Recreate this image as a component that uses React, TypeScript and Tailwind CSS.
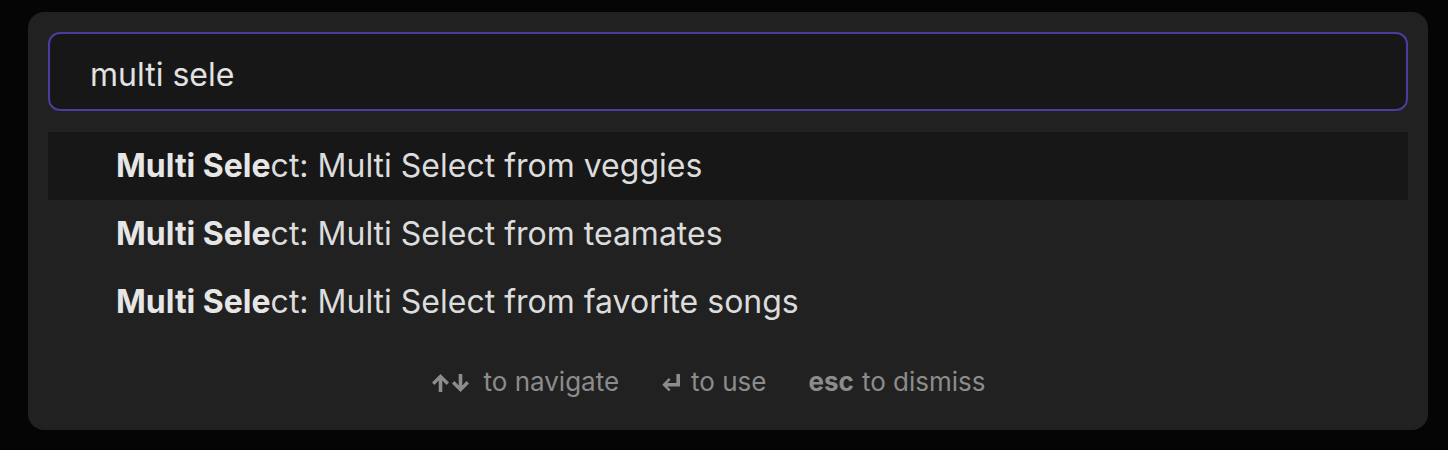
import React from "react";

const items = [
  { rest: "ct: Multi Select from veggies", active: true },
  { rest: "ct: Multi Select from teamates", active: false },
  { rest: "ct: Multi Select from favorite songs", active: false },
];

const ArrowUp = () => (
  <svg className="shrink-0" width="17" height="18" viewBox="0 0 17 18" fill="currentColor">
    <polygon points="8.5,0 17,8.5 14.6,10.9 10.3,6.6 10.3,18 6.7,18 6.7,6.6 2.4,10.9 0,8.5" />
  </svg>
);

const ArrowDown = () => (
  <svg className="shrink-0" width="17" height="18" viewBox="0 0 17 18" fill="currentColor">
    <polygon points="8.5,18 17,9.5 14.6,7.1 10.3,11.4 10.3,0 6.7,0 6.7,11.4 2.4,7.1 0,9.5" />
  </svg>
);

const Enter = () => (
  <svg className="shrink-0" width="19" height="17" viewBox="0 0 19 17" fill="currentColor">
    <polygon points="15.4,0 19,0 19,12.5 6.4,12.5 9.6,15.7 7.9,17.4 1.5,11 1.5,10.5 7.9,4.1 9.6,5.8 6.4,9 15.4,9" />
  </svg>
);

const App: React.FC = () => {
  return (
    <div
      className="w-[1448px] h-[450px] bg-[#050505] pt-3 pl-7"
      style={{ fontFamily: "Inter, 'Liberation Sans', sans-serif" }}
    >
      <div className="w-[1400px] h-[418px] bg-[#212121] rounded-2xl px-5 pt-5 flex flex-col">
        <div className="h-[79px] rounded-xl border-2 border-[#4a3d9e] bg-[#171717] flex items-center pl-[40px] pt-[6px] text-[32px] text-[#e2e2e2]">
          multi sele
        </div>
        <ul className="mt-[21px] flex flex-col">
          {items.map((item, i) => (
            <li
              key={i}
              className={`h-[68px] flex items-center pl-[68px] text-[32px] text-[#dcdcdc] ${
                item.active ? "bg-[#171717]" : ""
              }`}
            >
              <span className="font-bold text-[#e6e6e6]">Multi Sele</span>
              {item.rest}
            </li>
          ))}
        </ul>
        <div className="mt-[26px] pr-[38px] flex items-center justify-center gap-[42px] text-[26px] text-[#8c8c8c]">
          <span className="flex items-center">
            <span className="flex items-center gap-[3px] mr-[14px] mt-[2px]">
              <ArrowUp />
              <ArrowDown />
            </span>
            to navigate
          </span>
          <span className="flex items-center">
            <span className="mr-[11px] mt-[1px] flex items-center">
              <Enter />
            </span>
            to use
          </span>
          <span className="flex items-center">
            <span className="font-bold mr-[8px]">esc</span>to dismiss
          </span>
        </div>
      </div>
    </div>
  );
};

export default App;
